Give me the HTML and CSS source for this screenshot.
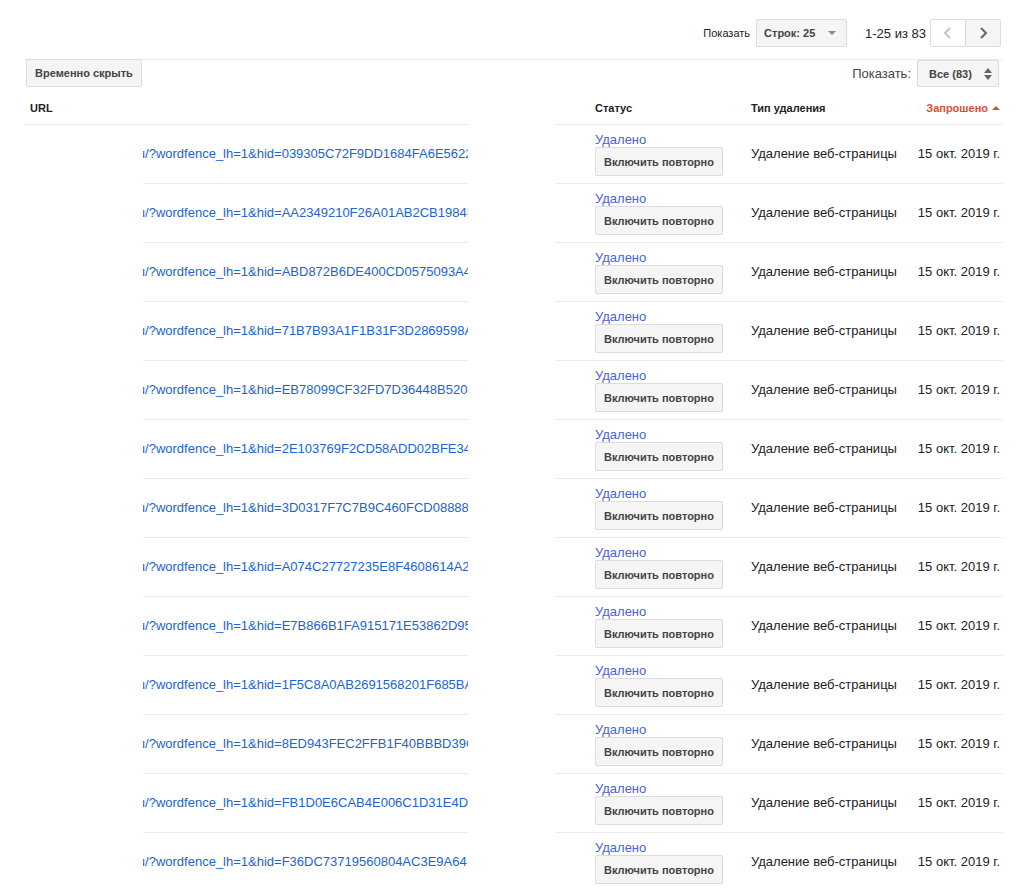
FILE: index.html
```
<!DOCTYPE html>
<html lang="ru">
<head>
    <meta charset="UTF-8">
    <title>Удаление URL</title>
    <link rel="stylesheet" href="styles.css">
</head>
<body>
    <div class="page">
        <div class="pager-bar">
            <span class="pager-label">Показать</span>
            <div class="select rows-select">
                <span>Строк: 25</span>
                <span class="caret-down"></span>
            </div>
            <span class="pager-range">1-25 из 83</span>
            <button class="nav-btn prev" type="button">
                <svg width="10" height="12" viewBox="0 0 10 12"><polyline points="7,1 2,6 7,11" fill="none" stroke="#c4c4c4" stroke-width="2"/></svg>
            </button>
            <button class="nav-btn next" type="button">
                <svg width="10" height="12" viewBox="0 0 10 12"><polyline points="3,1 8,6 3,11" fill="none" stroke="#666" stroke-width="2"/></svg>
            </button>
        </div>

        <div class="action-bar">
            <button class="btn" type="button">Временно скрыть</button>
            <div class="filter">
                <span class="filter-label">Показать:</span>
                <div class="select all-select">
                    <span>Все (83)</span>
                    <span class="updown">
                        <span class="tri-up"></span>
                        <span class="tri-down"></span>
                    </span>
                </div>
            </div>
        </div>

        <div class="grid">
            <!-- шапка -->
            <div class="th th-url">URL</div>
            <div class="gap"></div>
            <div class="th th-status">Статус</div>
            <div class="th">Тип удаления</div>
            <div class="th th-date">Запрошено <span class="sort-up"></span></div>

            <div class="spacer"></div>
            <div class="td td-url"><a class="url" href="#">ru/?wordfence_lh=1&amp;hid=039305C72F9DD1684FA6E5622B7F0A1C</a></div>
            <div class="gap"></div>
            <div class="td td-status"><a class="state" href="#">Удалено</a><button class="btn btn-row" type="button">Включить повторно</button></div>
            <div class="td">Удаление веб-страницы</div>
            <div class="td td-date">15 окт. 2019 г.</div>

            <div class="spacer"></div>
            <div class="td td-url"><a class="url" href="#">ru/?wordfence_lh=1&amp;hid=AA2349210F26A01AB2CB1984E3C1D5F0</a></div>
            <div class="gap"></div>
            <div class="td td-status"><a class="state" href="#">Удалено</a><button class="btn btn-row" type="button">Включить повторно</button></div>
            <div class="td">Удаление веб-страницы</div>
            <div class="td td-date">15 окт. 2019 г.</div>

            <div class="spacer"></div>
            <div class="td td-url"><a class="url" href="#">ru/?wordfence_lh=1&amp;hid=ABD872B6DE400CD0575093A4C2E18F77</a></div>
            <div class="gap"></div>
            <div class="td td-status"><a class="state" href="#">Удалено</a><button class="btn btn-row" type="button">Включить повторно</button></div>
            <div class="td">Удаление веб-страницы</div>
            <div class="td td-date">15 окт. 2019 г.</div>

            <div class="spacer"></div>
            <div class="td td-url"><a class="url" href="#">ru/?wordfence_lh=1&amp;hid=71B7B93A1F1B31F3D2869598A4E0C3B1</a></div>
            <div class="gap"></div>
            <div class="td td-status"><a class="state" href="#">Удалено</a><button class="btn btn-row" type="button">Включить повторно</button></div>
            <div class="td">Удаление веб-страницы</div>
            <div class="td td-date">15 окт. 2019 г.</div>

            <div class="spacer"></div>
            <div class="td td-url"><a class="url" href="#">ru/?wordfence_lh=1&amp;hid=EB78099CF32FD7D36448B520F19A6C0D</a></div>
            <div class="gap"></div>
            <div class="td td-status"><a class="state" href="#">Удалено</a><button class="btn btn-row" type="button">Включить повторно</button></div>
            <div class="td">Удаление веб-страницы</div>
            <div class="td td-date">15 окт. 2019 г.</div>

            <div class="spacer"></div>
            <div class="td td-url"><a class="url" href="#">ru/?wordfence_lh=1&amp;hid=2E103769F2CD58ADD02BFE34A7C9B81E</a></div>
            <div class="gap"></div>
            <div class="td td-status"><a class="state" href="#">Удалено</a><button class="btn btn-row" type="button">Включить повторно</button></div>
            <div class="td">Удаление веб-страницы</div>
            <div class="td td-date">15 окт. 2019 г.</div>

            <div class="spacer"></div>
            <div class="td td-url"><a class="url" href="#">ru/?wordfence_lh=1&amp;hid=3D0317F7C7B9C460FCD08888A1D2E3F4</a></div>
            <div class="gap"></div>
            <div class="td td-status"><a class="state" href="#">Удалено</a><button class="btn btn-row" type="button">Включить повторно</button></div>
            <div class="td">Удаление веб-страницы</div>
            <div class="td td-date">15 окт. 2019 г.</div>

            <div class="spacer"></div>
            <div class="td td-url"><a class="url" href="#">ru/?wordfence_lh=1&amp;hid=A074C27727235E8F4608614A2B9C7D1E</a></div>
            <div class="gap"></div>
            <div class="td td-status"><a class="state" href="#">Удалено</a><button class="btn btn-row" type="button">Включить повторно</button></div>
            <div class="td">Удаление веб-страницы</div>
            <div class="td td-date">15 окт. 2019 г.</div>

            <div class="spacer"></div>
            <div class="td td-url"><a class="url" href="#">ru/?wordfence_lh=1&amp;hid=E7B866B1FA915171E53862D95A0C3B4F</a></div>
            <div class="gap"></div>
            <div class="td td-status"><a class="state" href="#">Удалено</a><button class="btn btn-row" type="button">Включить повторно</button></div>
            <div class="td">Удаление веб-страницы</div>
            <div class="td td-date">15 окт. 2019 г.</div>

            <div class="spacer"></div>
            <div class="td td-url"><a class="url" href="#">ru/?wordfence_lh=1&amp;hid=1F5C8A0AB2691568201F685BA9D3E7C2</a></div>
            <div class="gap"></div>
            <div class="td td-status"><a class="state" href="#">Удалено</a><button class="btn btn-row" type="button">Включить повторно</button></div>
            <div class="td">Удаление веб-страницы</div>
            <div class="td td-date">15 окт. 2019 г.</div>

            <div class="spacer"></div>
            <div class="td td-url"><a class="url" href="#">ru/?wordfence_lh=1&amp;hid=8ED943FEC2FFB1F40BBBD39C5E1A7F08</a></div>
            <div class="gap"></div>
            <div class="td td-status"><a class="state" href="#">Удалено</a><button class="btn btn-row" type="button">Включить повторно</button></div>
            <div class="td">Удаление веб-страницы</div>
            <div class="td td-date">15 окт. 2019 г.</div>

            <div class="spacer"></div>
            <div class="td td-url"><a class="url" href="#">ru/?wordfence_lh=1&amp;hid=FB1D0E6CAB4E006C1D31E4D0B9A2C6F3</a></div>
            <div class="gap"></div>
            <div class="td td-status"><a class="state" href="#">Удалено</a><button class="btn btn-row" type="button">Включить повторно</button></div>
            <div class="td">Удаление веб-страницы</div>
            <div class="td td-date">15 окт. 2019 г.</div>

            <div class="spacer"></div>
            <div class="td td-url"><a class="url" href="#">ru/?wordfence_lh=1&amp;hid=F36DC73719560804AC3E9A64</a></div>
            <div class="gap"></div>
            <div class="td td-status"><a class="state" href="#">Удалено</a><button class="btn btn-row" type="button">Включить повторно</button></div>
            <div class="td">Удаление веб-страницы</div>
            <div class="td td-date">15 окт. 2019 г.</div>
        </div>
    </div>
</body>
</html>
```

FILE: styles.css
```
body {
    margin: 0;
    background: #fff;
    font-family: "Liberation Sans", Arial, sans-serif;
    color: #222;
}

.page {
    width: 978px;
    padding-left: 25px;
}

/* верхняя панель с пагинацией */
.pager-bar {
    display: flex;
    justify-content: flex-end;
    align-items: center;
    height: 28px;
    padding: 19px 2px 12px 0;
    border-bottom: 1px solid #ebebeb;
}

.pager-label {
    font-size: 11px;
    color: #222;
    margin-right: 6px;
}

.select {
    box-sizing: border-box;
    display: flex;
    align-items: center;
    justify-content: space-between;
    background: #f5f5f5;
    border: 1px solid #dcdcdc;
    border-radius: 2px;
    font-size: 11px;
    font-weight: bold;
    color: #444;
}

.rows-select {
    width: 91px;
    height: 28px;
    padding: 0 10px 0 7px;
}

.caret-down {
    width: 0;
    height: 0;
    border-left: 4px solid transparent;
    border-right: 4px solid transparent;
    border-top: 4px solid #888;
}

.pager-range {
    font-size: 13px;
    color: #222;
    margin-left: 18px;
    margin-right: 4px;
}

.nav-btn {
    box-sizing: border-box;
    width: 36px;
    height: 28px;
    padding: 0;
    border: 1px solid #dcdcdc;
    border-radius: 2px;
    display: flex;
    align-items: center;
    justify-content: center;
}

.prev {
    background: #fff;
}

.next {
    background: #f5f5f5;
    margin-left: -1px;
}

/* панель действий */
.action-bar {
    display: flex;
    justify-content: space-between;
    align-items: center;
    height: 28px;
    margin-top: -1px;
}

.btn {
    box-sizing: border-box;
    height: 28px;
    margin-left: 1px;
    padding: 0 8px;
    background: #f5f5f5;
    border: 1px solid #dcdcdc;
    border-radius: 2px;
    font-family: inherit;
    font-size: 11px;
    font-weight: bold;
    color: #444;
}

.filter {
    display: flex;
    align-items: center;
    margin-right: 4px;
}

.filter-label {
    font-size: 13px;
    color: #444;
    margin-right: 6px;
}

.all-select {
    width: 82px;
    height: 27px;
    margin-top: 1px;
    padding: 0 6px 0 11px;
}

.updown {
    display: flex;
    flex-direction: column;
    gap: 2px;
}

.tri-up {
    width: 0;
    height: 0;
    border-left: 4px solid transparent;
    border-right: 4px solid transparent;
    border-bottom: 5px solid #666;
}

.tri-down {
    width: 0;
    height: 0;
    border-left: 4px solid transparent;
    border-right: 4px solid transparent;
    border-top: 5px solid #666;
}

/* таблица */
.grid {
    display: grid;
    grid-template-columns: 118px 325px 87px 196px 154px 98px;
}

.th {
    height: 22px;
    padding-top: 15px;
    border-bottom: 1px solid #ebebeb;
    font-size: 11px;
    font-weight: bold;
    line-height: 13px;
    color: #222;
}

.th-url {
    grid-column: span 2;
    padding-left: 5px;
}

.th-status,
.td-status {
    padding-left: 40px;
}

.th-date {
    display: flex;
    justify-content: flex-end;
    align-items: flex-start;
    padding-right: 3px;
    color: #dd4b39;
}

.sort-up {
    width: 0;
    height: 0;
    margin: 4px 0 0 4px;
    border-left: 4px solid transparent;
    border-right: 4px solid transparent;
    border-bottom: 4px solid #dd4b39;
}

.td {
    height: 57px;
    padding-bottom: 1px;
    border-bottom: 1px solid #ebebeb;
    display: flex;
    align-items: center;
    font-size: 13px;
    color: #222;
}

.td-url {
    overflow: hidden;
    white-space: nowrap;
}

.url {
    margin-left: -9.5px;
    color: #2163d4;
    text-decoration: none;
}

.td-status {
    flex-direction: column;
    align-items: flex-start;
    justify-content: flex-start;
    height: 51px;
    padding: 7px 0 0 40px;
}

.state {
    line-height: 15px;
    color: #4a62d6;
    text-decoration: none;
}

.btn-row {
    width: 128px;
    height: 29px;
    margin-left: 0;
    padding: 0;
}

.td-date {
    justify-content: flex-end;
    padding-right: 3px;
}
```
